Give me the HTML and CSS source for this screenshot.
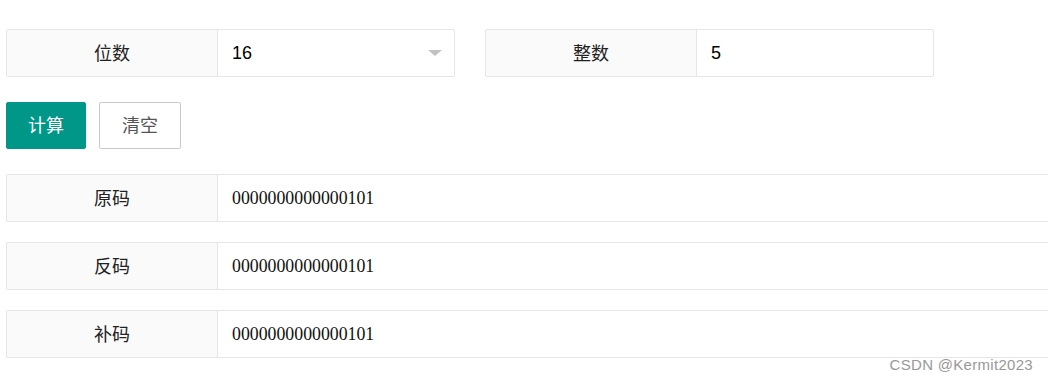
FILE: index.html
```html
<!DOCTYPE html>
<html lang="zh">
<head>
<meta charset="utf-8">
<link rel="stylesheet" href="styles.css">
</head>
<body>
<div class="page">
  <div class="top-row">
    <div class="field">
      <div class="label">位数</div>
      <div class="value select">16<span class="caret"></span></div>
    </div>
    <div class="field">
      <div class="label">整数</div>
      <div class="value">5</div>
    </div>
  </div>
  <div class="buttons">
    <button class="btn btn-primary">计算</button>
    <button class="btn btn-plain">清空</button>
  </div>
  <div class="results">
    <div class="field wide">
      <div class="label">原码</div>
      <div class="value mono">0000000000000101</div>
    </div>
    <div class="field wide">
      <div class="label">反码</div>
      <div class="value mono">0000000000000101</div>
    </div>
    <div class="field wide">
      <div class="label">补码</div>
      <div class="value mono">0000000000000101</div>
    </div>
  </div>
</div>
<div class="watermark">CSDN @Kermit2023</div>
</body>
</html>
```
FILE: styles.css
```css
html, body {
  margin: 0;
  padding: 0;
  background: #fff;
  overflow: hidden;
  width: 1048px;
  height: 382px;
  position: relative;
}
body {
  font-family: "Liberation Sans", "Noto Sans CJK SC", sans-serif;
  color: #333;
}
.page {
  padding: 29px 0 0 6px;
  display: flex;
  flex-direction: column;
}
.top-row {
  display: flex;
  gap: 30px;
}
.field {
  display: flex;
  box-sizing: border-box;
  height: 48px;
  width: 449px;
  border: 1px solid #e6e6e6;
  border-radius: 2px;
  background: #fff;
}
.field.wide {
  width: 1042px;
  border-right: none;
  border-radius: 2px 0 0 2px;
}
.label {
  box-sizing: border-box;
  width: 211px;
  flex: none;
  background: #fafafa;
  border-right: 1px solid #e6e6e6;
  display: flex;
  align-items: center;
  justify-content: center;
  font-size: 18px;
  line-height: 1;
  padding-bottom: 3px;
  font-family: "Noto Sans CJK SC", sans-serif;
  color: #222;
}
.value {
  flex: 1;
  display: flex;
  align-items: center;
  padding-left: 14px;
  font-size: 18px;
  color: #000;
  position: relative;
}
.caret {
  position: absolute;
  right: 12px;
  top: 20px;
  width: 0;
  height: 0;
  border-left: 7px solid transparent;
  border-right: 7px solid transparent;
  border-top: 6px solid #c2c2c2;
}
.mono {
  font-family: "Liberation Serif", serif;
  font-size: 17.8px;
  color: #111;
}
.buttons {
  display: flex;
  gap: 13px;
  margin-top: 25px;
}
.btn {
  box-sizing: border-box;
  height: 47px;
  font-size: 18px;
  line-height: 1;
  padding: 0 0 3px 0;
  font-family: "Noto Sans CJK SC", sans-serif;
  border-radius: 2px;
  cursor: pointer;
}
.btn-primary {
  width: 80px;
  background: #009688;
  border: 1px solid #009688;
  color: #fff;
}
.btn-plain {
  width: 82px;
  background: #fff;
  border: 1px solid #c9c9c9;
  color: #555;
}
.results {
  margin-top: 25px;
  display: flex;
  flex-direction: column;
  gap: 20px;
}
.watermark {
  position: absolute;
  right: 15px;
  top: 356px;
  font-family: "Liberation Sans", sans-serif;
  font-size: 15px;
  color: #999;
  letter-spacing: 0.3px;
}
```
